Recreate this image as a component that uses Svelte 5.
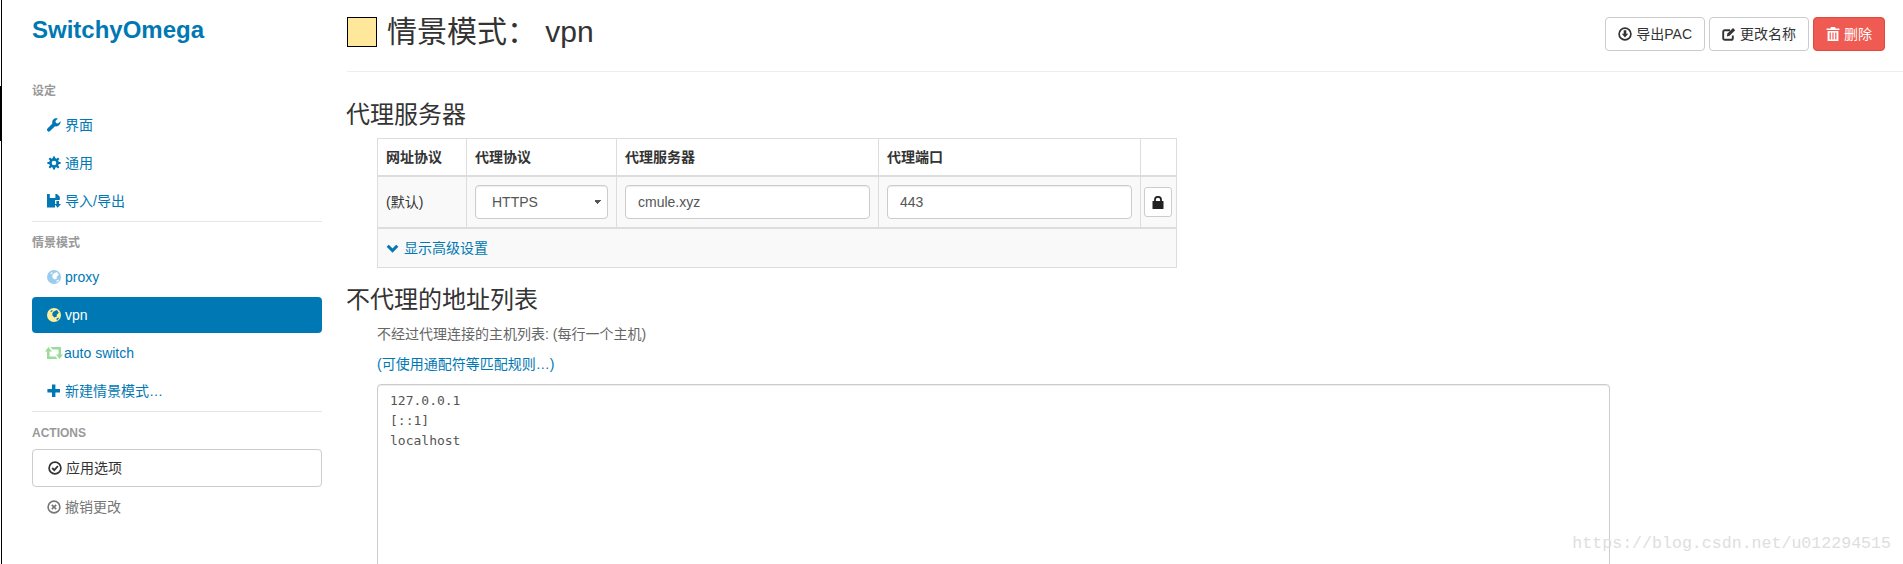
<script lang="ts">
	const hosts = '127.0.0.1\n[::1]\nlocalhost';
</script>

<div class="page">
	<aside class="side">
		<div class="brand">SwitchyOmega</div>

		<div class="label">设定</div>
		<a class="item">
			<svg class="ico" viewBox="0 0 14 14"><path d="M13.6 3.2 11 5.6 9 5 8.4 3 10.9.5C9.2-.1 7.4.3 6.3 1.5 5.2 2.6 4.9 4.2 5.4 5.6L.5 10.5c-.7.7-.7 1.9 0 2.6s1.9.7 2.6 0L8 8.2c1.4.5 3 .2 4.1-.9 1.2-1.2 1.6-2.9 1.5-4.1z" /></svg>
			界面
		</a>
		<a class="item">
			<svg class="ico" viewBox="0 0 14 14">
				<path class="line" stroke-width="2.2" d="M7 .4V13.6M.4 7H13.6M2.3 2.3l9.4 9.4M11.7 2.3l-9.4 9.4" />
				<circle cx="7" cy="7" r="3.6" fill="#fff" stroke="currentColor" stroke-width="2.6" />
			</svg>
			通用
		</a>
		<a class="item">
			<svg class="ico" viewBox="0 0 14 14">
				<path d="M0 0H2.8V4H8.4V0H10L12.8 2.8V6H8V13.4H0Z" />
				<path d="M9.4 7H12V10H14L10.7 13.8 7.4 10H9.4Z" />
			</svg>
			导入/导出
		</a>
		<hr />

		<div class="label">情景模式</div>
		<a class="item">
			<svg class="ico" viewBox="0 0 14 14">
				<circle cx="7" cy="7" r="7" fill="#99ccee" />
				<path fill="#fff" d="M7 3.2 10 2 11.8 4.8 9.6 7 10 8.6 7.4 9.6 5.4 7.6 5.4 5ZM9.4 10.8l2-1.2.6 1-2.2 1.8ZM3.4 3l1.8-1 .4 1-1.6 1.2Z" />
			</svg>
			proxy
		</a>
		<a class="item active">
			<svg class="ico" viewBox="0 0 14 14">
				<circle cx="7" cy="7" r="7" fill="#ffee99" />
				<path fill="#0078b3" d="M7 3.2 10 2 11.8 4.8 9.6 7 10 8.6 7.4 9.6 5.4 7.6 5.4 5ZM9.4 10.8l2-1.2.6 1-2.2 1.8ZM3.4 3l1.8-1 .4 1-1.6 1.2Z" />
			</svg>
			vpn
		</a>
		<a class="item">
			<svg class="ico wide" viewBox="0 0 18 12">
				<path fill="#99dd99" d="M3.5 0 7 4.5H4.5V9.5H10.5L12.5 12H2V4.5H0Z" />
				<path fill="#99dd99" d="M14.5 12 11 7.5H13.5V2.5H7.5L5.5 0H16V7.5H18Z" />
			</svg>
			auto switch
		</a>
		<a class="item">
			<svg class="ico" viewBox="0 0 14 14"><path d="M5 .5h3.4V5H13v3.4H8.4V13H5V8.4H.4V5H5z" /></svg>
			新建情景模式…
		</a>
		<hr />

		<div class="label">ACTIONS</div>
		<button class="apply">
			<svg class="ico" viewBox="0 0 14 14">
				<circle class="line" cx="7" cy="7" r="5.9" stroke-width="1.7" />
				<path class="line" stroke-width="1.8" d="M4.2 7 6.3 9.1 9.9 5" />
			</svg>
			应用选项
		</button>
		<a class="item revert">
			<svg class="ico" viewBox="0 0 14 14">
				<circle class="line" cx="7" cy="7" r="5.9" stroke-width="1.6" />
				<path class="line" stroke-width="1.7" d="M4.8 4.8l4.4 4.4M9.2 4.8l-4.4 4.4" />
			</svg>
			撤销更改
		</a>
	</aside>

	<main class="main">
		<header class="head">
			<h1><span class="swatch"></span>情景模式： vpn</h1>
			<div class="btns">
				<button class="btn">
					<svg class="ico" viewBox="0 0 14 14">
						<circle class="line" cx="7" cy="7" r="5.9" stroke-width="1.7" />
						<path d="M5.7 3.2H8.3V6.8H10.2L7 10.6 3.8 6.8H5.7Z" />
					</svg>
					导出PAC
				</button>
				<button class="btn">
					<svg class="ico" viewBox="0 0 14 14">
						<path class="line" stroke-width="1.9" d="M10.8 8.5V11.2A1.6 1.6 0 0 1 9.2 12.8H2.8A1.6 1.6 0 0 1 1.2 11.2V4.8A1.6 1.6 0 0 1 2.8 3.2H8" />
						<path d="M11 1 13.2 3.2 7.6 8.8 4.8 9.4 5.4 6.6Z" />
					</svg>
					更改名称
				</button>
				<button class="btn danger">
					<svg class="ico" viewBox="0 0 14 14">
						<path d="M5 0H9L9.6 1.4H13.4V3H.6V1.4H4.4Z" />
						<path fill-rule="evenodd" d="M1.6 4H12.4V14H1.6ZM3.6 5.4V12.6H4.8V5.4ZM6.4 5.4V12.6H7.6V5.4ZM9.2 5.4V12.6H10.4V5.4Z" />
					</svg>
					删除
				</button>
			</div>
		</header>

		<h2 class="first">代理服务器</h2>
		<table class="proxy">
			<colgroup>
				<col class="c1" />
				<col class="c2" />
				<col class="c3" />
				<col class="c4" />
				<col class="c5" />
			</colgroup>
			<thead>
				<tr>
					<th>网址协议</th>
					<th>代理协议</th>
					<th>代理服务器</th>
					<th>代理端口</th>
					<th></th>
				</tr>
			</thead>
			<tbody>
				<tr class="row">
					<td>(默认)</td>
					<td>
						<select class="field pick">
							<option>HTTPS</option>
						</select>
					</td>
					<td><input class="field" type="text" value="cmule.xyz" /></td>
					<td><input class="field" type="text" value="443" /></td>
					<td class="lockcell">
						<button class="lock" aria-label="lock">
							<svg viewBox="0 0 12 13">
								<path class="line" stroke-width="1.8" d="M3 6V3.8a3 3 0 0 1 6 0V6" />
								<rect x="0.5" y="5" width="11" height="8" rx="0.6" fill="currentColor" />
							</svg>
						</button>
					</td>
				</tr>
				<tr class="foot">
					<td colspan="5">
						<a class="more">
							<svg class="chev" viewBox="0 0 12 9"><path class="line" stroke-width="3" d="M1.2 1.8 6 6.6 10.8 1.8" /></svg>
							显示高级设置
						</a>
					</td>
				</tr>
			</tbody>
		</table>

		<h2 class="second">不代理的地址列表</h2>
		<p class="help">不经过代理连接的主机列表: (每行一个主机)</p>
		<p class="help"><a class="link">(可使用通配符等匹配规则…)</a></p>
		<textarea class="hosts" value={hosts}></textarea>
	</main>

	<div class="mark">https://blog.csdn.net/u012294515</div>
</div>

<style>
	:global(body) {
		margin: 0;
		background: #fff;
	}
	.page {
		position: relative;
		display: flex;
		height: 564px;
		overflow: hidden;
		padding-left: 1px;
		box-sizing: border-box;
		font-family: 'Liberation Sans', 'Noto Sans CJK SC', sans-serif;
		font-size: 14px;
		line-height: 20px;
		color: #333;
	}
	/* stray window edge from the capture */
	.page::before {
		content: '';
		position: absolute;
		left: 0;
		top: 86px;
		width: 1px;
		height: 55px;
		background: #000;
	}
	.side {
		flex: 0 0 346px;
		box-sizing: border-box;
		border-left: 1px solid #000;
		padding: 14px 25px 0 30px;
	}
	.brand {
		height: 30px;
		line-height: 32px;
		margin-bottom: 38px;
		font-size: 24px;
		font-weight: bold;
		color: #0078b3;
	}
	.label {
		height: 18px;
		line-height: 19px;
		font-size: 12px;
		font-weight: bold;
		color: #999;
	}
	.label + .item {
		margin-top: 7px;
	}
	.item {
		display: flex;
		align-items: center;
		gap: 4px;
		height: 36px;
		margin-bottom: 2px;
		padding-left: 15px;
		border-radius: 4px;
		color: #0078b3;
	}
	.item.active {
		background: #0078b3;
		color: #fff;
	}
	.item.revert {
		color: #777;
		margin-top: 2px;
	}
	.ico {
		flex: none;
		width: 14px;
		height: 14px;
		fill: currentColor;
	}
	.ico.wide {
		width: 18px;
		height: 12px;
		margin-left: -2px;
		margin-right: -3px;
	}
	.line {
		fill: none;
		stroke: currentColor;
	}
	hr {
		height: 1px;
		margin: 0 0 12px;
		border: 0;
		background: #e5e5e5;
	}
	.apply {
		display: flex;
		align-items: center;
		gap: 4px;
		width: 100%;
		height: 38px;
		margin-top: 7px;
		padding: 0 0 0 15px;
		border: 1px solid #ccc;
		border-radius: 4px;
		background: #fff;
		color: #333;
		font: inherit;
	}
	.main {
		flex: 1;
		min-width: 0;
	}
	.head {
		display: flex;
		justify-content: space-between;
		height: 54px;
		padding: 17px 18px 0 0;
		box-sizing: content-box;
		border-bottom: 1px solid #eee;
	}
	h1 {
		display: flex;
		align-items: center;
		height: 30px;
		margin: 0;
		font-size: 30px;
		font-weight: 400;
		line-height: 34px;
		white-space: pre;
	}
	.swatch {
		width: 28px;
		height: 28px;
		margin-right: 10px;
		border: 1px solid #000;
		background: #ffe79c;
	}
	.btns {
		display: flex;
		gap: 4px;
		height: 34px;
	}
	.btn {
		display: flex;
		align-items: center;
		gap: 4px;
		height: 34px;
		padding: 0 12px;
		border: 1px solid #ccc;
		border-radius: 4px;
		background: #fff;
		color: #333;
		font: inherit;
		font-size: 14px;
	}
	.btn.danger {
		background: #ef5a52;
		border-color: #e4473c;
		color: #fff;
	}
	h2 {
		height: 34px;
		margin: 0 0 0 -1px;
		font-size: 24px;
		font-weight: 400;
		line-height: 34px;
	}
	h2.first {
		margin-top: 26px;
		margin-bottom: 6px;
	}
	h2.second {
		margin-top: 15px;
		margin-bottom: 7px;
	}
	.proxy {
		width: 800px;
		margin-left: 30px;
		border-collapse: collapse;
		table-layout: fixed;
		border: 1px solid #ddd;
	}
	.c1 {
		width: 89px;
	}
	.c2 {
		width: 150px;
	}
	.c3 {
		width: 262px;
	}
	.c4 {
		width: 262px;
	}
	th,
	td {
		border: 1px solid #ddd;
		padding: 0 8px;
		text-align: left;
		font-size: 14px;
	}
	th {
		height: 36px;
		border-bottom: 2px solid #ddd;
		font-weight: bold;
	}
	.row td {
		height: 50px;
		background: #f9f9f9;
		border-bottom: 2px solid #ddd;
	}
	.foot td {
		height: 38px;
		background: #f9f9f9;
	}
	.field {
		display: block;
		width: 100%;
		height: 34px;
		box-sizing: border-box;
		padding: 6px 12px;
		border: 1px solid #ccc;
		border-radius: 4px;
		background-color: #fff;
		box-shadow: inset 0 1px 1px rgba(0, 0, 0, 0.075);
		color: #555;
		font: inherit;
		font-size: 14px;
	}
	.pick {
		appearance: none;
		padding-left: 16px;
		background-image: linear-gradient(45deg, transparent 50%, #555 50%), linear-gradient(135deg, #555 50%, transparent 50%);
		background-repeat: no-repeat;
		background-size: 3px 5px;
		background-position: right 9px center, right 6px center;
	}
	.lockcell {
		padding: 0 3px;
	}
	.lock {
		display: flex;
		align-items: center;
		justify-content: center;
		width: 28px;
		height: 30px;
		padding: 0;
		border: 1px solid #ccc;
		border-radius: 3px;
		background: #fff;
		color: #222;
	}
	.lock svg {
		width: 12px;
		height: 13px;
	}
	.more {
		display: flex;
		align-items: center;
		gap: 5px;
		color: #0078b3;
	}
	.chev {
		width: 13px;
		height: 9px;
	}
	.help {
		height: 20px;
		margin: 0 0 10px 30px;
		font-size: 14px;
		color: #666;
	}
	.link {
		color: #0078b3;
	}
	.hosts {
		display: block;
		width: 1233px;
		height: 300px;
		margin-left: 30px;
		box-sizing: border-box;
		padding: 6px 12px;
		border: 1px solid #ccc;
		border-radius: 4px;
		box-shadow: inset 0 1px 1px rgba(0, 0, 0, 0.075);
		resize: none;
		color: #555;
		font-family: 'DejaVu Sans Mono', monospace;
		font-size: 13px;
		line-height: 20px;
	}
	.mark {
		position: absolute;
		right: 12px;
		top: 533px;
		font-family: 'Liberation Mono', monospace;
		font-size: 16.6px;
		line-height: 22px;
		color: #dedede;
	}
</style>
